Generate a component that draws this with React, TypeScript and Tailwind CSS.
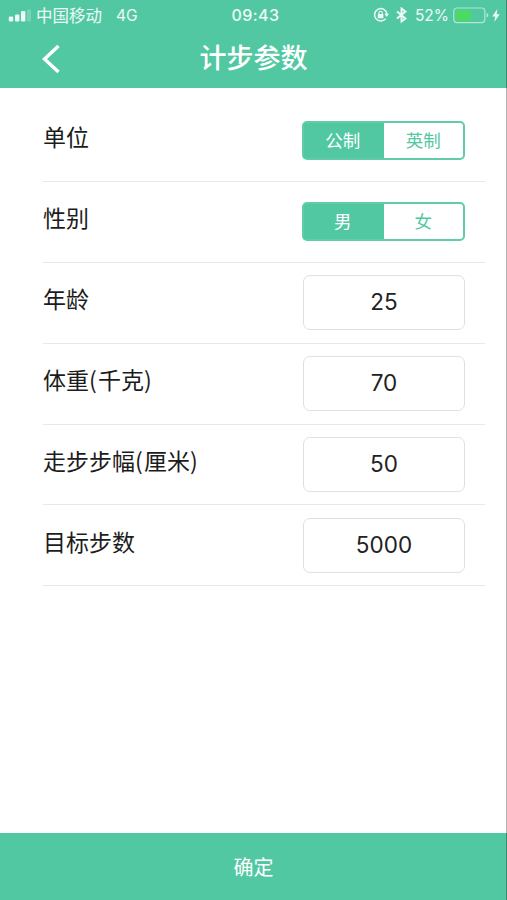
import * as React from 'react';
import { useState } from 'react';

type SegmentedProps = {
  options: string[];
  value: string;
  onChange: (value: string) => void;
};

function Segmented({ options, value, onChange }: SegmentedProps) {
  return (
    <div className="flex h-[39px] w-[163px] overflow-hidden rounded-[5px] border-2 border-[#60ccaa] bg-[#52c8a2]">
      {options.map((option) => (
        <button
          key={option}
          onClick={() => onChange(option)}
          className={
            option === value
              ? 'w-1/2 bg-[#52c8a2] pr-[2px] pb-[2px] text-[17.5px] text-white'
              : 'w-1/2 bg-white pb-[2px] text-[17.5px] text-[#52c8a2]'
          }
        >
          {option}
        </button>
      ))}
    </div>
  );
}

function NumberBox({ value, onChange }: { value: string; onChange: (value: string) => void }) {
  return (
    <input
      value={value}
      onChange={(e) => onChange(e.target.value)}
      className="h-[55px] w-[162px] rounded-[7px] border-[1.5px] border-[#e0e0e0] bg-white pb-[2px] text-center font-[Inter] text-[22.5px] text-[#222] outline-none"
    />
  );
}

function Row({ label, children }: { label: string; children: React.ReactNode }) {
  // brackets sit a little wider than the characters around them
  const parts = label.split(/([()])/);
  return (
    <div className="flex h-[80.9px] items-center justify-between border-b-[1.5px] border-[#e8e8e8] pr-5">
      <span className="pb-[9px] text-[23px] leading-8 text-[#1c1c1c]">
        {parts.map((part, i) =>
          part === '(' || part === ')' ? (
            <span key={i} className="tracking-[1.2px]">{part}</span>
          ) : (
            part
          )
        )}
      </span>
      {children}
    </div>
  );
}

function StatusBar() {
  return (
    <div className="grid h-[30px] grid-cols-3 items-center pl-2 pr-[7px] text-[16px] leading-none text-white/90">
      <div className="flex items-center">
        <svg width="24" height="14" viewBox="0 0 24 14" fill="currentColor">
          <rect x="0.8" y="8.5" width="4.4" height="5" rx="1.2" />
          <rect x="7" y="6.5" width="4.4" height="7" rx="1.2" />
          <rect x="13" y="3" width="4.4" height="10.5" rx="1.2" />
          <rect x="19" y="1.5" width="4" height="12" rx="1.2" opacity="0.25" />
        </svg>
        <span className="ml-1 text-[16.5px] whitespace-nowrap">中国移动</span>
        <span className="ml-[14px] pt-[2px] font-[Inter] text-[15.5px]">4G</span>
      </div>
      <div className="pl-[3px] pb-px text-center font-[Inter] font-medium tracking-[0.4px]">09:43</div>
      <div className="flex items-center justify-end">
        {/* rotation lock */}
        <svg width="16" height="16" viewBox="0 0 16 16" fill="none" stroke="currentColor" strokeWidth="1.5">
          <path d="M12.7 11.6A6.2 6.2 0 1 1 13.9 7" />
          <path d="M11.4 6.8h4.6l-2.3 3.2z" fill="currentColor" stroke="none" />
          <rect x="4.8" y="7" width="5.6" height="4.2" rx="0.5" fill="currentColor" stroke="none" />
          <path d="M5.9 7.2V6a1.7 1.7 0 0 1 3.4 0v1.200" strokeWidth="1.1" />
        </svg>
        <svg className="ml-[7px]" width="11" height="16" viewBox="0 0 11 16" fill="none" stroke="currentColor" strokeWidth="1.9">
          <path d="M1 4.5l8.5 7L5.5 14.500V1.500l4 3L1 11.5" />
        </svg>
        <span className="ml-[8px] pt-[2px] font-[Inter] text-[15.5px]">52%</span>
        <svg className="ml-[4px]" width="37" height="17" viewBox="0 0 37 17" fill="none">
          <rect x="0.8" y="1" width="31" height="14.6" rx="3" stroke="white" strokeOpacity="0.55" strokeWidth="1.2" />
          <rect x="2.5" y="2.8" width="15.5" height="11" rx="1.2" fill="#4cd964" />
          <path d="M33.5 6v4.6c1.2-.3 1.8-1.2 1.8-2.3S34.7 6.3 33.5 6z" fill="white" fillOpacity="0.55" />
        </svg>
        <svg className="ml-[2px]" width="8" height="13" viewBox="0 0 8 13" fill="currentColor">
          <path d="M5.3 0L0.3 7.4h3L2.3 13 7.7 5.2h-3z" />
        </svg>
      </div>
    </div>
  );
}

export default function App() {
  const [unit, setUnit] = useState('公制');
  const [gender, setGender] = useState('男');
  const [age, setAge] = useState('25');
  const [weight, setWeight] = useState('70');
  const [stride, setStride] = useState('50');
  const [goal, setGoal] = useState('5000');

  return (
    <div className="relative flex h-[900px] w-[507px] flex-col overflow-hidden bg-white font-['Noto_Sans_CJK_SC',sans-serif]">
      <header className="h-[87.5px] bg-[#52c8a2] text-white">
        <StatusBar />
        <div className="grid h-[57px] grid-cols-[1fr_auto_1fr] items-center">
          <button className="ml-[40px] w-5">
            <svg width="20" height="30" viewBox="0 0 20 30" fill="none" stroke="currentColor" strokeWidth="3.4">
              <path d="M18.5 2L4.500 15l14 13" />
            </svg>
          </button>
          <h1 className="pb-[3px] text-[27px] leading-9 font-medium">计步参数</h1>
        </div>
      </header>

      <main className="flex-1 pt-[13.5px] pr-[22px] pl-[43px]">
        <Row label="单位">
          <Segmented options={['公制', '英制']} value={unit} onChange={setUnit} />
        </Row>
        <Row label="性别">
          <Segmented options={['男', '女']} value={gender} onChange={setGender} />
        </Row>
        <Row label="年龄">
          <NumberBox value={age} onChange={setAge} />
        </Row>
        <Row label="体重(千克)">
          <NumberBox value={weight} onChange={setWeight} />
        </Row>
        <Row label="走步步幅(厘米)">
          <NumberBox value={stride} onChange={setStride} />
        </Row>
        <Row label="目标步数">
          <NumberBox value={goal} onChange={setGoal} />
        </Row>
      </main>

      <button className="h-[67px] bg-[#52c8a2] text-[20px] text-white">确定</button>

      {/* screen edge */}
      <div className="absolute inset-y-0 right-0 w-px bg-black/30" />
    </div>
  );
}
